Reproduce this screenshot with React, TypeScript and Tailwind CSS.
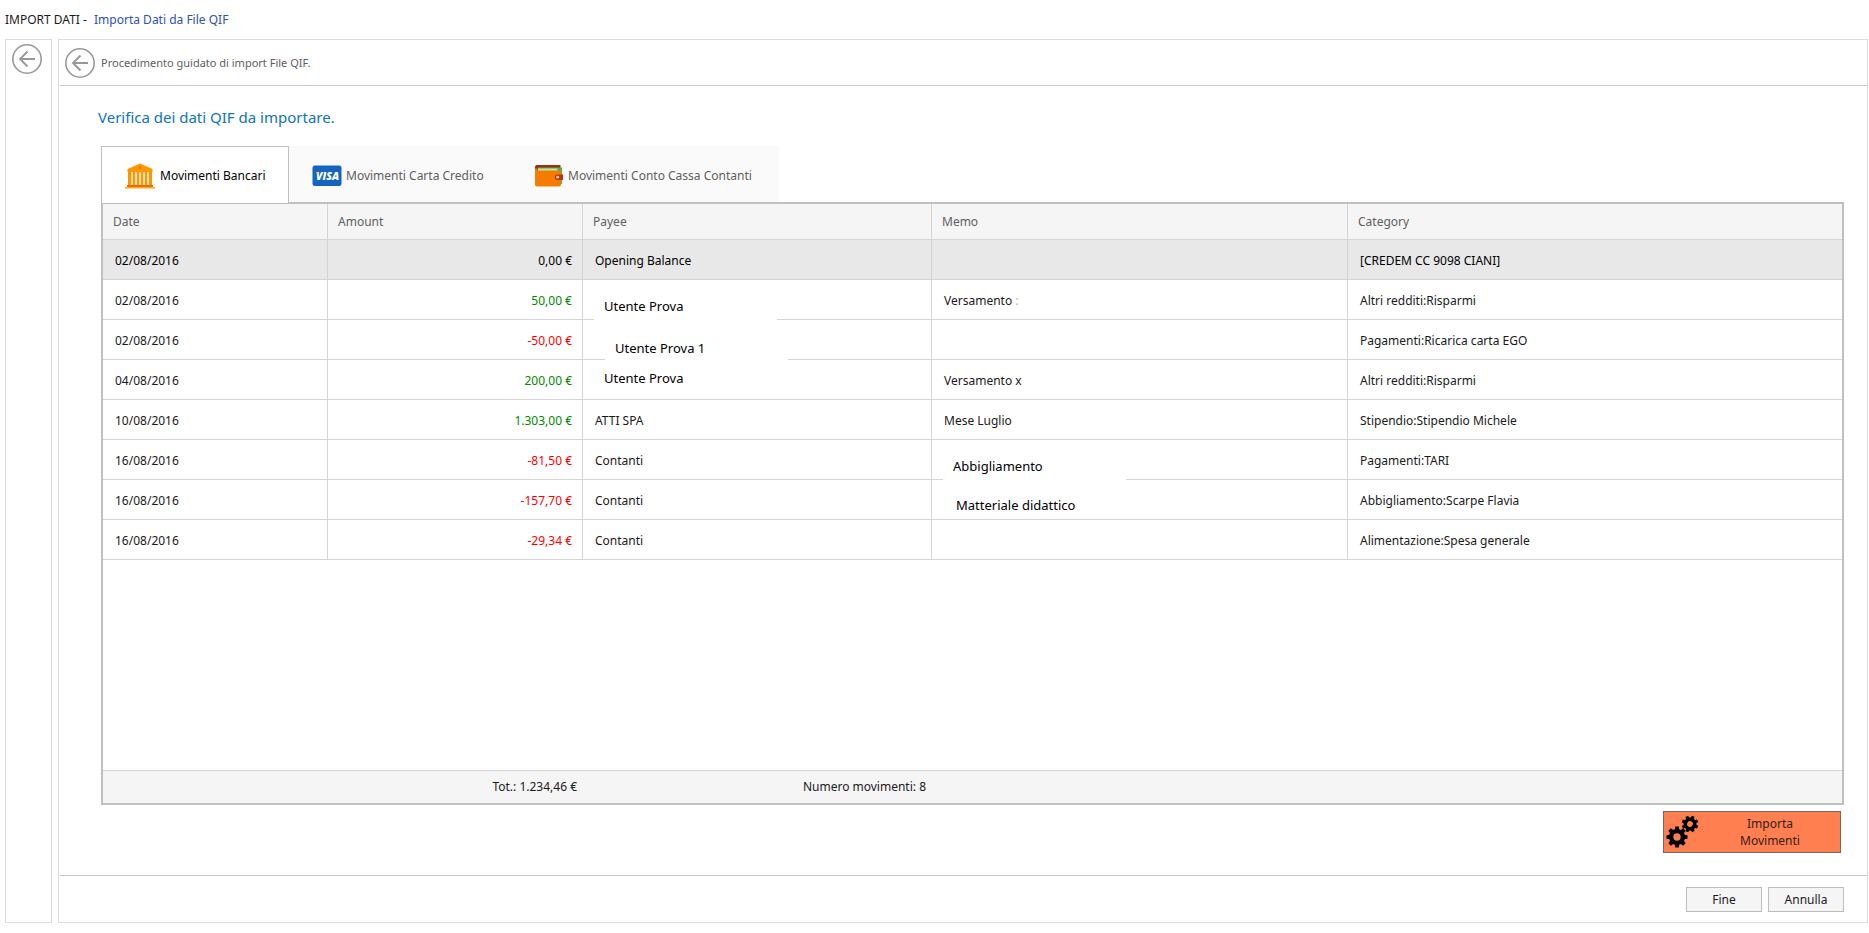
import React, { useState } from 'react';
import clsx from 'clsx';

interface Movimento {
  date: string;
  amount: string;
  kind: 'zero' | 'in' | 'out';
  payee: React.ReactNode;
  memo: React.ReactNode;
  category: string;
}

// note typed over the grid: it hides the row line under it
const Note = ({ text, className }: { text: string; className: string }) => (
  <span className={clsx('absolute z-10 flex w-[183px] bg-white text-[13px] leading-4 text-black', className)}>{text}</span>
);

const movimenti: Movimento[] = [
  { date: '02/08/2016', amount: '0,00 €', kind: 'zero', payee: 'Opening Balance', memo: '', category: '[CREDEM CC 9098 CIANI]' },
  { date: '02/08/2016', amount: '50,00 €', kind: 'in', payee: <Note text="Utente Prova" className="left-[11px] top-[18px] pb-2 pl-[10px]" />, memo: <>Versamento <span className="text-[#cdb56c]">:</span></>, category: 'Altri redditi:Risparmi' },
  { date: '02/08/2016', amount: '-50,00 €', kind: 'out', payee: <Note text="Utente Prova 1" className="left-[22px] top-[20px] pb-2 pl-[10px]" />, memo: '', category: 'Pagamenti:Ricarica carta EGO' },
  { date: '04/08/2016', amount: '200,00 €', kind: 'in', payee: <Note text="Utente Prova" className="left-[11px] top-[10px] pl-[10px]" />, memo: 'Versamento x', category: 'Altri redditi:Risparmi' },
  { date: '10/08/2016', amount: '1.303,00 €', kind: 'in', payee: 'ATTI SPA', memo: 'Mese Luglio', category: 'Stipendio:Stipendio Michele' },
  { date: '16/08/2016', amount: '-81,50 €', kind: 'out', payee: 'Contanti', memo: <Note text="Abbigliamento" className="left-[11px] top-[18px] pb-2 pl-[10px]" />, category: 'Pagamenti:TARI' },
  { date: '16/08/2016', amount: '-157,70 €', kind: 'out', payee: 'Contanti', memo: <Note text="Matteriale didattico" className="left-[14px] top-[17px] pl-[10px]" />, category: 'Abbigliamento:Scarpe Flavia' },
  { date: '16/08/2016', amount: '-29,34 €', kind: 'out', payee: 'Contanti', memo: '', category: 'Alimentazione:Spesa generale' },
];

const amountColor = { zero: 'text-black', in: 'text-[#008a00]', out: 'text-[#ff0000]' };

const BackButton = ({ label }: { label: string }) => (
  <button type="button" aria-label={label} className="shrink-0">
    <svg width="30" height="30" viewBox="0 0 30 30" fill="none" stroke="#999" className="block">
      <circle cx="15" cy="15" r="14.2" strokeWidth="1.6" />
      <path d="M23 15H8M15.500 7.500 8 15l7.500 7.500" strokeWidth="1.900" />
    </svg>
  </button>
);

const BankIcon = () => (
  <svg width="32" height="26" viewBox="0 0 32 26" className="block shrink-0">
    <path d="M16 .5 28.5 6v3h-25V6z" fill="#ff9800" />
    <path d="M5 9h22v13H5z" fill="#ffe0b2" />
    <path d="M4 9h3v13H4zM9 9h2v13H9zM13 9h2v13h-2zM17 9h2v13h-2zM21 9h2v13h-2zM25 9h3v13h-3z" fill="#ff9800" />
    <circle cx="16" cy="4.8" r="1.3" fill="#ef6c00" />
    <path d="M3 22h26v2H3z" fill="#ef6c00" />
    <path d="M1 24h30v1.5H1z" fill="#ffa726" />
  </svg>
);

const VisaIcon = () => (
  <svg width="30" height="22" viewBox="0 0 30 22" className="block shrink-0">
    <rect x=".5" y=".5" width="29" height="20.5" rx="2.5" fill="#1565c0" />
    <text x="15.5" y="14.7" textAnchor="middle" fontFamily="Open Sans" fontStyle="italic" fontWeight="800" fontSize="10.5" fill="#fff">VISA</text>
    <path d="M3.6 7h2.6l.8 3.4z" fill="#ffc107" />
  </svg>
);

const WalletIcon = () => (
  <svg width="30" height="24" viewBox="0 0 30 24" className="block shrink-0">
    <path d="M3 1h23.500v3H4v3H1V3a2 2 0 0 1 2-2z" fill="#9c2f10" />
    <path d="M4 3.500h24V20H4z" fill="#4caf50" />
    <path d="M4 4.500h19.500V7H4z" fill="#c8dfae" />
    <path d="M1 4.500h2.500V6.500H26a1 1 0 0 1 1 1v13a2 2 0 0 1-2 2H3a2 2 0 0 1-2-2z" fill="#f57c00" />
    <path d="M23.500 10.500H29V16h-5.500a2.750 2.750 0 0 1 0-5.500z" fill="#bf360c" />
    <circle cx="23.700" cy="13.200" r="1.400" fill="#ffccbc" />
  </svg>
);

const GEAR_TEETH = [0, 45, 90, 135, 180, 225, 270, 315];

const Gear = ({ cx, cy, r, turn }: { cx: number; cy: number; r: number; turn: number }) => (
  <g transform={`translate(${cx} ${cy}) rotate(${turn}) scale(${r / 10})`}>
    <circle r="5.600" fill="none" stroke="#000" strokeWidth="4.200" />
    {GEAR_TEETH.map(a => (
      <path key={a} d="M-2.200-6.500-1.700-10h3.400L2.200-6.500z" transform={`rotate(${a})`} />
    ))}
  </g>
);

const tabs = [
  { label: 'Movimenti Bancari', icon: <BankIcon />, width: 'w-[188px]' },
  { label: 'Movimenti Carta Credito', icon: <VisaIcon />, width: 'w-[222px]' },
  { label: 'Movimenti Conto Cassa Contanti', icon: <WalletIcon />, width: 'w-[268px]' },
];

const headCell = 'border-r border-b border-[#d4d4d4] pl-[10px] text-left font-normal last:border-r-0';
const bodyCell = 'relative border-r border-b border-[#d4d4d4] pt-[2px] pr-[10px] pl-3 last:border-r-0';
const smallButton = 'h-[25px] w-[76px] border border-[#bdbdbd] bg-[#f5f5f5] text-[#1a1a1a]';

const App: React.FC = () => {
  const [active, setActive] = useState(0);
  const [selected, setSelected] = useState(0);

  return (
    <div className="flex min-h-screen flex-col bg-white pr-px pb-[10px] pl-[5px] font-['Noto_Sans',sans-serif] text-[12px] leading-4 text-[#1a1a1a]">
      <header className="flex h-[39px] items-center gap-1">
        <h1 className="whitespace-pre">IMPORT DATI - </h1>
        <a href="#qif" className="text-[#3050b8]">Importa Dati da File QIF</a>
      </header>

      <div className="flex flex-1 gap-[6px]">
        <aside className="flex w-[47px] shrink-0 items-start border border-[#dcdcdc] pt-1 pl-[6px]">
          <BackButton label="Indietro" />
        </aside>

        <main className="flex min-w-0 flex-1 flex-col border border-[#dcdcdc]">
          <div className="ml-px flex h-[46px] items-center gap-[6px] border-b border-[#c6c6c6] pl-[5px] text-[#606060]">
            <BackButton label="Torna al passo precedente" />
            <p className="text-[11px]">Procedimento guidato di import File QIF.</p>
          </div>

          <section className="flex flex-1 flex-col pr-[23px] pl-[42px]">
            <h2 className="mt-[19px] -ml-[3px] text-[15px] leading-6 text-[#0f75bc]">Verifica dei dati QIF da importare.</h2>

            <div role="tablist" className="mt-[17px] flex h-[56px] self-start bg-[#fafafa]">
              {tabs.map((t, i) => (
                <button
                  key={t.label}
                  type="button"
                  role="tab"
                  aria-selected={i === active}
                  onClick={() => setActive(i)}
                  className={clsx(
                    'flex items-center gap-1 border border-b-0 pt-[2px] pl-[22px]',
                    t.width,
                    i === active ? 'relative z-10 -mb-px border-[#c0c0c0] bg-white text-black' : 'border-transparent text-[#606060]'
                  )}
                >
                  {t.icon}
                  {t.label}
                </button>
              ))}
            </div>

            <div className="flex flex-1 flex-col border-2 border-[#c0c0c0]">
              <table className="w-full table-fixed border-separate border-spacing-0">
                <colgroup>
                  <col className="w-[225px]" />
                  <col className="w-[255px]" />
                  <col className="w-[349px]" />
                  <col className="w-[416px]" />
                  <col />
                </colgroup>
                <thead>
                  <tr className="h-9 bg-[#f5f5f5] text-[#606060]">
                    <th className={headCell}>Date</th>
                    <th className={headCell}>Amount</th>
                    <th className={headCell}>Payee</th>
                    <th className={headCell}>Memo</th>
                    <th className={headCell}>Category</th>
                  </tr>
                </thead>
                <tbody>
                  {movimenti.map((m, i) => (
                    <tr key={i} onClick={() => setSelected(i)} className={clsx('h-10', i === selected && 'bg-[#e8e8e8] text-black')}>
                      <td className={bodyCell}>{m.date}</td>
                      <td className={clsx(bodyCell, 'text-right', amountColor[m.kind])}>{m.amount}</td>
                      <td className={bodyCell}>{m.payee}</td>
                      <td className={bodyCell}>{m.memo}</td>
                      <td className={bodyCell}>{m.category}</td>
                    </tr>
                  ))}
                </tbody>
              </table>
              <div className="mt-auto flex h-[33px] items-center border-t border-[#d4d4d4] bg-[#f5f5f5] text-right">
                <p className="w-[480px] pr-[6px]">Tot.: 1.234,46 €</p>
                <p className="w-[349px] pr-[6px]">Numero movimenti: 8</p>
              </div>
            </div>

            <div className="flex justify-end pt-[6px] pr-[3px] pb-[22px]">
              <button type="button" className="flex h-[42px] w-[178px] items-center border border-[#6b6b6b] bg-[#ff7f50] pl-[2px] text-[#33211a]">
                <svg width="34" height="34" viewBox="0 0 34 34" className="block shrink-0">
                  <Gear cx={11} cy={22} r={10.5} turn={0} />
                  <Gear cx={24} cy={9} r={8.3} turn={22} />
                </svg>
                <span className="flex-1 px-8 leading-[17px]">Importa Movimenti</span>
              </button>
            </div>
          </section>

          <footer className="ml-px flex h-[47px] items-start justify-end gap-[6px] border-t border-[#c6c6c6] pt-[11px] pr-[23px]">
            <button type="button" className={smallButton}>Fine</button>
            <button type="button" className={smallButton}>Annulla</button>
          </footer>
        </main>
      </div>
    </div>
  );
};

export default App;
